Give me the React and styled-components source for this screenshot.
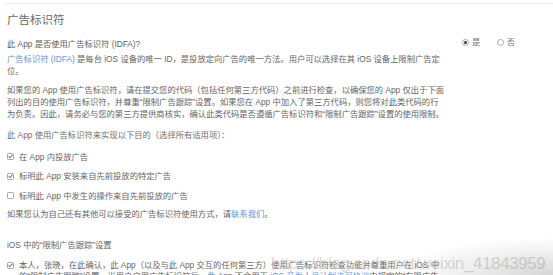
import React from "react";
import styled, { createGlobalStyle } from "styled-components";

const GlobalStyle = createGlobalStyle`
  html, body { margin: 0; padding: 0; background: #fff; }
  body {
    font-family: "Liberation Sans", "Noto Sans CJK SC", sans-serif;
    color: #666;
  }
`;

const Page = styled.div`
  position: relative;
  width: 553px;
  height: 275px;
  overflow: hidden;
  box-sizing: border-box;
  padding: 3px 0 0 6px;
  background: #fff;
`;

const Section = styled.section`
  border-top: 1px solid #ebebeb;
  padding-left: 1px;
`;

const Title = styled.h2`
  margin: 8px 0 0;
  font-size: 11.5px;
  line-height: 16px;
  font-weight: normal;
  color: #6a6a6a;
`;

const Text = styled.p`
  margin: ${(p) => p.$mt || 0}px 0 0;
  max-width: 438px;
  font-size: 8.3px;
  line-height: ${(p) => p.$lh || 12}px;
  color: ${(p) => p.$color || "#666"};
`;

const QuestionRow = styled.div`
  display: flex;
  align-items: center;
  justify-content: space-between;
  margin-top: 8px;
  padding-right: 38px;
  font-size: 8.3px;
  line-height: 12px;
  color: #5f5f5f;
`;

const RadioGroup = styled.div`
  display: flex;
  gap: 16.5px;
  margin-bottom: 4px;
`;

const RadioItem = styled.label`
  display: flex;
  align-items: center;
  gap: 3px;
  color: #777;
`;

const RadioCircle = styled.span`
  box-sizing: border-box;
  width: 7px;
  height: 7px;
  border-radius: 50%;
  border: 1px solid #a8a8a8;
  display: flex;
  align-items: center;
  justify-content: center;
  &::after {
    content: "";
    width: 3px;
    height: 3px;
    border-radius: 50%;
    background: ${(p) => (p.$on ? "#333" : "transparent")};
  }
`;

const Link = styled.span`
  color: #5f95dd;
`;

const CheckList = styled.div`
  display: flex;
  flex-direction: column;
  gap: 7.5px;
  margin-top: 9.7px;
`;

const CheckRow = styled.div`
  display: flex;
  align-items: ${(p) => (p.$top ? "flex-start" : "center")};
  gap: 5px;
  margin-top: ${(p) => p.$mt || 0}px;
  font-size: 8.3px;
  line-height: ${(p) => p.$lh || 12}px;
  color: #666;
`;

const Box = styled.span`
  box-sizing: border-box;
  flex: none;
  width: 7px;
  height: 7px;
  margin-top: ${(p) => p.$mt || 0}px;
  border: 1px solid #a5a5a5;
  border-radius: 1.5px;
  background: #fff;
  display: flex;
  align-items: center;
  justify-content: center;
  overflow: visible;
`;

const CheckText = styled.span`
  max-width: 420px;
`;

const Watermark = styled.div`
  position: absolute;
  left: 271px;
  top: 255px;
  font-family: "Liberation Sans", sans-serif;
  font-size: 17px;
  line-height: 17px;
  letter-spacing: -0.4px;
  color: rgba(190, 190, 190, 0.55);
  white-space: nowrap;
  pointer-events: none;
`;

const CornerShade = styled.div`
  position: absolute;
  right: 0;
  bottom: 0;
  width: 150px;
  height: 36px;
  background: radial-gradient(
    ellipse at 100% 100%,
    rgba(0, 0, 0, 0.16) 0%,
    rgba(0, 0, 0, 0.06) 45%,
    rgba(0, 0, 0, 0) 75%
  );
  pointer-events: none;
`;

function Check({ on, mt }) {
  return (
    <Box $mt={mt}>
      {on && (
        <svg width="7" height="7" viewBox="0 0 7 7">
          <path d="M1.2 3.6 L2.8 5.1 L5.9 1.4" fill="none" stroke="#2d3550" strokeWidth="1.3" strokeLinecap="round" strokeLinejoin="round" />
        </svg>
      )}
    </Box>
  );
}

function CheckItem({ on, children }) {
  return (
    <CheckRow>
      <Check on={on} />
      <CheckText>{children}</CheckText>
    </CheckRow>
  );
}

export default function App() {
  return (
    <Page>
      <GlobalStyle />
      <Section>
        <Title>广告标识符</Title>
        <QuestionRow>
          <span>此 App 是否使用广告标识符 (IDFA)?</span>
          <RadioGroup>
            <RadioItem>
              <RadioCircle $on />是
            </RadioItem>
            <RadioItem>
              <RadioCircle />否
            </RadioItem>
          </RadioGroup>
        </QuestionRow>
        <Text $mt={0.5}>
          <Link>广告标识符 (IDFA)</Link> 是每台 iOS 设备的唯一 ID，是投放定向广告的唯一方法。用户可以选择在其 iOS 设备上限制广告定位。
        </Text>
        <Text $mt={7.5}>
          如果您的 App 使用广告标识符，请在提交您的代码（包括任何第三方代码）之前进行检查，以确保您的 App 仅出于下面列出的目的使用广告标识符，并尊重“限制广告跟踪”设置。如果您在 App 中加入了第三方代码，则您将对此类代码的行为负责。因此，请务必与您的第三方提供商核实，确认此类代码是否遵循广告标识符和“限制广告跟踪”设置的使用限制。
        </Text>
        <Text $mt={9} $color="#707070">
          此 App 使用广告标识符来实现以下目的（选择所有适用项）：
        </Text>
        <CheckList>
          <CheckItem on>在 App 内投放广告</CheckItem>
          <CheckItem on>标明此 App 安装来自先前投放的特定广告</CheckItem>
          <CheckItem>标明此 App 中发生的操作来自先前投放的广告</CheckItem>
        </CheckList>
        <Text $mt={6.3}>
          如果您认为自己还有其他可以接受的广告标识符使用方式，请<Link>联系我们</Link>。
        </Text>
        <Text $mt={19.5}>iOS 中的“限制广告跟踪”设置</Text>
        <CheckRow $top $mt={8.8} $lh={11}>
          <Check on mt={2} />
          <CheckText>
            本人，张晓，在此确认，此 App（以及与此 App 交互的任何第三方）使用广告标识符检查功能并尊重用户在 iOS 中的“限制广告跟踪”设置。当用户启用广告标识符后，此 App 不会用于 <Link>iOS 开发人员计划许可协议</Link>中规定的“有限广告目的”以外的用途。
          </CheckText>
        </CheckRow>
      </Section>
      <Watermark>https://blog.csdn.net/weixin_41843959</Watermark>
      <CornerShade />
    </Page>
  );
}
